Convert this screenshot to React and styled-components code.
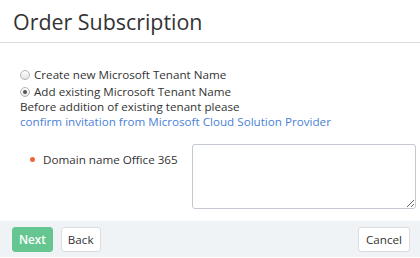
import styled, { createGlobalStyle } from "styled-components"

const GlobalStyle = createGlobalStyle`
    html, body {
        margin: 0;
        padding: 0;
        background: #ffffff;
    }
    body {
        font-family: "Open Sans", "Liberation Sans", sans-serif;
        color: #333333;
    }
`

const Wizard = styled.div`
    width: 420px;
    height: 258px;
    display: flex;
    flex-direction: column;
    overflow: hidden;
`

const Header = styled.div`
    height: 43px;
    display: flex;
    align-items: center;
    padding-left: 13px;
    padding-top: 1px;
    border-bottom: 1px solid #dcdde1;
    box-sizing: border-box;
    h1 {
        margin: 0;
        font-size: 21.4px;
        font-weight: 400;
        color: #333;
    }
`

const Body = styled.div`
    flex: 1;
    padding: 23px 4px 0 20px;
    font-size: 11.65px;
    line-height: 15px;
`

const RadioRow = styled.label`
    display: flex;
    align-items: center;
    gap: 4px;
    height: 17px;
    input {
        appearance: none;
        margin: 0;
        width: 10px;
        height: 10px;
        border-radius: 50%;
        border: 1px solid #b4b4b4;
        background: linear-gradient(#fdfdfd, #e4e4e4);
        box-sizing: border-box;
        position: relative;
    }
    input:checked::after {
        content: "";
        position: absolute;
        left: 2px;
        top: 2px;
        width: 4px;
        height: 4px;
        border-radius: 50%;
        background: #555;
    }
`

const Note = styled.div`
    color: #333;
    line-height: 15px;
    margin-top: -1px;
    a {
        color: #4a7fd6;
        text-decoration: none;
    }
`

const FieldRow = styled.div`
    display: flex;
    margin-top: 15px;
`

const FieldLabel = styled.div`
    width: 172px;
    display: flex;
    align-items: flex-start;
    padding-left: 10px;
    padding-top: 8px;
    box-sizing: border-box;
    gap: 8px;
    &::before {
        content: "";
        width: 5px;
        height: 5px;
        border-radius: 50%;
        background: #f0643c;
        margin-top: 5px;
    }
`

const TextArea = styled.textarea`
    width: 224px;
    height: 65px;
    box-sizing: border-box;
    border: 1px solid #c4c9d1;
    border-radius: 3px;
    margin: 0;
    font-family: inherit;
`

const Footer = styled.div`
    height: 36px;
    margin-bottom: 1px;
    background: #eff3f6;
    display: flex;
    align-items: center;
    padding: 0 10px 0 12px;
    gap: 8px;
`

const Button = styled.button`
    height: 25px;
    padding: 0 ${props => props.$pushRight ? "7px" : "6px"};
    border-radius: 3px;
    font-family: inherit;
    font-size: 11.65px;
    cursor: pointer;
    border: 1px solid ${props => props.$primary ? "#66c691" : "#d9dde2"};
    background: ${props => props.$primary ? "#66c691" : "#ffffff"};
    color: ${props => props.$primary ? "#ffffff" : "#333"};
    font-weight: ${props => props.$primary ? 600 : 400};
    margin-left: ${props => props.$pushRight ? "auto" : "0"};
`

const App = () => {
    return (
        <Wizard>
            <GlobalStyle />
            <Header>
                <h1>Order Subscription</h1>
            </Header>
            <Body>
                <RadioRow>
                    <input type="radio" name="tenant" />
                    Create new Microsoft Tenant Name
                </RadioRow>
                <RadioRow>
                    <input type="radio" name="tenant" defaultChecked />
                    Add existing Microsoft Tenant Name
                </RadioRow>
                <Note>
                    Before addition of existing tenant please<br />
                    <a href="#">confirm invitation from Microsoft Cloud Solution Provider</a>
                </Note>
                <FieldRow>
                    <FieldLabel>Domain name Office 365</FieldLabel>
                    <TextArea />
                </FieldRow>
            </Body>
            <Footer>
                <Button $primary>Next</Button>
                <Button>Back</Button>
                <Button $pushRight>Cancel</Button>
            </Footer>
        </Wizard>
    )
}

export default App
